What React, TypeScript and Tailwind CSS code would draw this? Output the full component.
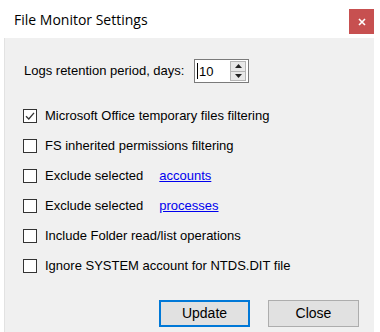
import React from 'react';

const FONT = { fontFamily: '"Liberation Sans", Arial, sans-serif' };

interface OptionRow {
  readonly label: string;
  readonly link?: string;
  readonly checked?: boolean;
}

const OPTIONS: ReadonlyArray<OptionRow> = [
  { label: 'Microsoft Office temporary files filtering', checked: true },
  { label: 'FS inherited permissions filtering' },
  { label: 'Exclude selected', link: 'accounts' },
  { label: 'Exclude selected', link: 'processes' },
  { label: 'Include Folder read/list operations' },
  { label: 'Ignore SYSTEM account for NTDS.DIT file' },
];

function CheckBox({ checked }: { checked?: boolean }) {
  return (
    <span className="flex h-[14px] w-[14px] shrink-0 items-center justify-center border border-[#333333] bg-white">
      {checked && (
        <svg width="10" height="10" viewBox="0 0 10 10" aria-hidden>
          <path d="M1 5.2 L3.8 8 L9 1.8" fill="none" stroke="#333333" strokeWidth="1.3" />
        </svg>
      )}
    </span>
  );
}

function SpinBox() {
  return (
    <div className="flex h-[24px] w-[55px] items-center border border-[#7a7a7a] bg-white pl-[2px] pr-[2px]">
      <span className="mr-[1px] h-[16px] w-px bg-black" />
      <span className="flex-1 text-[13px] leading-none text-black">10</span>
      <div className="flex h-[20px] w-[16px] flex-col border border-[#b5b5b5] bg-[#e8e8e8]">
        <span className="flex flex-1 items-center justify-center border-b border-[#b5b5b5]">
          <svg width="7" height="4" viewBox="0 0 7 4" aria-hidden>
            <path d="M0 4 L3.5 0 L7 4 Z" fill="#222" />
          </svg>
        </span>
        <span className="flex flex-1 items-center justify-center">
          <svg width="7" height="4" viewBox="0 0 7 4" aria-hidden>
            <path d="M0 0 L7 0 L3.5 4 Z" fill="#222" />
          </svg>
        </span>
      </div>
    </div>
  );
}

export default function App() {
  return (
    <div className="flex h-[332px] w-[380px] flex-col bg-white" style={FONT}>
      <div className="flex h-[38px] shrink-0 items-start justify-between pl-[14px] pr-[6px]">
        <span
          className="mt-[9px] text-[14px] text-black"
          style={{ fontFamily: '"Open Sans", "Liberation Sans", sans-serif' }}
        >
          File Monitor Settings
        </span>
        <button className="mt-[9px] flex h-[25px] w-[25px] items-center justify-center bg-[#c75050]">
          <svg width="8" height="8" viewBox="0 0 8 8" aria-hidden>
            <path d="M1 1 L7 7 M7 1 L1 7" stroke="#fff" strokeWidth="1.6" />
          </svg>
        </button>
      </div>

      <div className="ml-[4px] flex w-[370px] flex-1 flex-col border-l border-[#e2e2e2] bg-[#f0f0f0] pt-[21px] text-[13px] text-black">
        <div className="flex items-center pl-[19px]">
          <span className="w-[170px]">Logs retention period, days:</span>
          <SpinBox />
        </div>

        <div className="mt-[18px] flex flex-col pl-[18px]">
          {OPTIONS.map((opt, i) => (
            <label key={i} className="flex h-[30px] items-center gap-[8px]">
              <CheckBox checked={opt.checked} />
              <span>{opt.label}</span>
              {opt.link && (
                <a className="ml-[8px] text-[#0000ee] underline" href="#">
                  {opt.link}
                </a>
              )}
            </label>
          ))}
        </div>

        <div className="mt-[19px] flex justify-end gap-[18px] pr-[15px]">
          <button className="h-[27px] w-[91px] border-2 border-[#0078d7] bg-[#e1e1e1] text-[14px] text-black">
            Update
          </button>
          <button className="h-[27px] w-[91px] border border-[#adadad] bg-[#e1e1e1] text-[14px] text-black">
            Close
          </button>
        </div>
      </div>
    </div>
  );
}
